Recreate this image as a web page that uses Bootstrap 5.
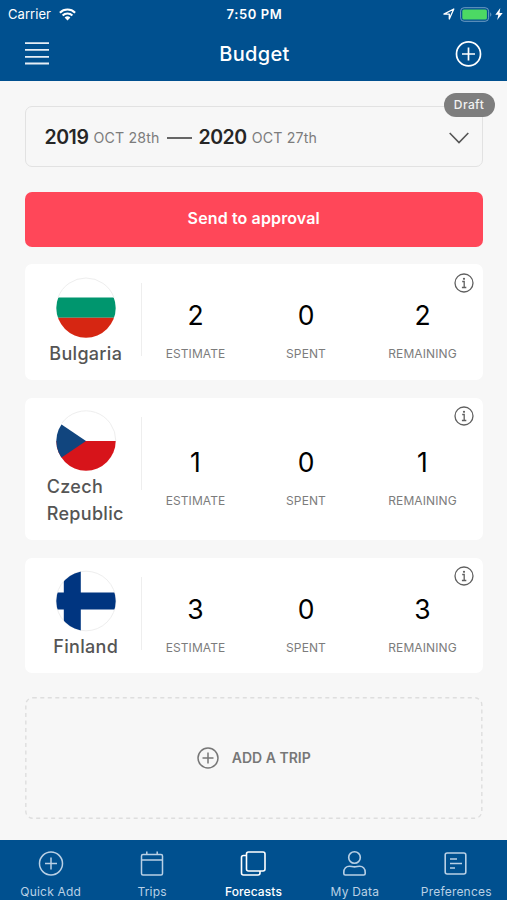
<!DOCTYPE html>
<html lang="en">
<head>
<meta charset="utf-8">
<meta name="viewport" content="width=device-width, initial-scale=1">
<title>Budget</title>
<link href="https://cdn.jsdelivr.net/npm/bootstrap@5.3.0/dist/css/bootstrap.min.css" rel="stylesheet">
<style>
body{font-family:Inter,"Liberation Sans",sans-serif;background:#f7f7f7;color:#222}
svg{display:block;fill:none;flex:none}
.app{height:900px;overflow:hidden}
.topbar{height:81px;background:#00508f;color:#fff}
.statusbar{height:27px;font-size:13px;line-height:28px;letter-spacing:.05px}
.carrier{padding-left:8px}
.clock{font-weight:600;letter-spacing:.6px;padding-right:2px}
.battery{margin-left:5px}
.bolt{margin-left:2px}
.titlebar{height:54px;padding:0 25px}
.titlebar h1{font-size:20px;font-weight:500;letter-spacing:.35px;line-height:52px;padding-left:5px}
.content{padding:25px 24.5px 0 25px}
.period{height:61px;border:1.5px solid #e2e2e2;border-radius:7px;padding:3px 13px 0 18.5px}
.year{font-size:19.5px;font-weight:600;letter-spacing:-.45px;color:#262626}
.day{font-size:14.2px;color:#7c7c7c;margin-left:5px;letter-spacing:.15px}
.dash{width:25px;height:1.5px;background:#666;margin:0 6px 0 8px}
.status-pill{top:-14px;right:-13px;height:24px;width:51px;background:#7e7e7e;color:#f2f2f2;font-size:12px;font-weight:500;line-height:23px;letter-spacing:.4px}
.btn-send{height:55px;margin-top:24.5px;margin-bottom:17.5px;background:#ff4759;border-radius:7px;color:#fff;font-size:16px;font-weight:600;letter-spacing:.13px;padding:0 0 3px}
.btn-send:hover{background:#f03c4f;color:#fff}
.trip{background:#fff;border-radius:7px;margin-bottom:18px;height:116px}
.trip.tall{height:142px}
.trip.last{height:115px;margin-bottom:24px}
.country{width:116px;padding-top:13px;padding-left:6px}
.tall .country,.last .country{padding-top:12px}
.country-name{font-size:18px;font-weight:500;line-height:27px;color:#555;letter-spacing:.3px;margin-top:1px;width:78px;white-space:nowrap}
.rule{width:1px;height:73px;margin-top:19px;background:#eee}
.figures{padding-top:18px}
.figure-col{text-align:center}
.c1{width:108px}.c2{width:113px}.c3{width:120px}
.amount{font-size:26.5px;line-height:32px;color:#000}
.caption-text{font-size:12px;line-height:18px;margin-top:14px;color:#7c7c7c;letter-spacing:.1px}
.info{top:9px;right:8.5px}
.tall .info,.last .info{top:8px}
.add-trip{height:122px;color:#777;font-size:14px;font-weight:600;gap:13px;position:relative;padding-bottom:1px}
.tabs{height:60px;background:#00508f;color:#b9d0e5;font-size:12px;letter-spacing:.2px}
.tabs a{width:20%;color:inherit;padding-top:10px;line-height:16px;gap:8px}
.tabs a.active{color:#fff;font-weight:500;letter-spacing:.1px}
</style>
</head>
<body>
<svg width="0" height="0" class="position-absolute" aria-hidden="true">
  <symbol id="info" viewBox="0 0 20 20"><g stroke="#606060" fill="none"><circle cx="10" cy="10" r="9" stroke-width="1.3"/><path d="M8.2 8.5h2v6M7.900 14.500h4.400" stroke-width="1.3"/></g><circle cx="10" cy="5.800" r="1.100" fill="#606060"/></symbol>
</svg>
<div class="app d-flex flex-column">
  <header class="topbar">
    <div class="statusbar row g-0">
      <div class="col d-flex align-items-center carrier">Carrier
        <svg class="ms-2" width="17" height="13" viewBox="0 0 17 13"><g stroke="#fff" stroke-width="2.1"><path d="M.9 4.700a10.800 10.800 0 0 1 15.200 0M3.600 7.500a6.900 6.900 0 0 1 9.800 0"/></g><path d="M5.600 9.600a4.100 4.100 0 0 1 5.800 0L8.500 12.500z" fill="#fff"/></svg>
      </div>
      <div class="col-auto clock">7:50 PM</div>
      <div class="col d-flex align-items-center justify-content-end pe-1">
        <svg width="12" height="12" viewBox="0 0 12 12"><path d="M.9 6.100 10.800 1 6.300 11V6.100z" stroke="#fff" stroke-width="1.3" stroke-linejoin="round"/></svg>
        <svg class="battery" width="33" height="15" viewBox="0 0 33 15"><rect x=".6" y=".7" width="28" height="13.600" rx="3.500" stroke="#6e9cc4"/><rect x="2.300" y="2.400" width="24.600" height="10.200" rx="1.500" fill="#4cd964"/><path d="M30.200 5.200q2.400 2.300 0 4.600z" fill="#6e9cc4"/></svg>
        <svg class="bolt" width="8" height="12" viewBox="0 0 8 12"><path d="M5.300 0 .3 6.700h3L2.200 12 7.700 5H4.500z" fill="#fff"/></svg>
      </div>
    </div>
    <div class="titlebar d-flex align-items-center justify-content-between">
      <svg width="24" height="24" viewBox="0 0 24 24"><path d="M0 1.100h24M0 7.900h24M0 14.800h24M0 21.500h24" stroke="#e6eef6" stroke-width="1.8"/></svg>
      <h1 class="m-0">Budget</h1>
      <svg width="27" height="27" viewBox="0 0 27 27" stroke="#fff" stroke-width="1.700"><circle cx="13.500" cy="12.900" r="12"/><path d="M13.500 6.500v13M7 13h13"/></svg>
    </div>
  </header>

  <main class="content flex-grow-1">
    <div class="period d-flex align-items-center position-relative">
      <span class="year">2019</span><span class="day">OCT 28th</span>
      <span class="dash"></span>
      <span class="year">2020</span><span class="day">OCT 27th</span>
      <svg class="ms-auto" width="20" height="12" viewBox="0 0 20 12"><path d="M.7 1 10 10.500 19.300 1" stroke="#555" stroke-width="1.600"/></svg>
      <span class="status-pill position-absolute rounded-pill text-center">Draft</span>
    </div>

    <button class="btn btn-send w-100 border-0">Send to approval</button>

    <section class="trip position-relative d-flex">
      <div class="country d-flex flex-column align-items-center">
        <svg width="62" height="62" viewBox="0 0 62 62"><clipPath id="disc"><circle cx="31" cy="31" r="29.700"/></clipPath><g clip-path="url(#disc)"><path d="M0 0h62v20.600H0z" fill="#fff"/><path d="M0 20.600h62v20.200H0z" fill="#00966e"/><path d="M0 40.800h62V62H0z" fill="#d62612"/></g><path d="M3 20.600a29.800 29.800 0 0 1 56 0" stroke="#eee"/></svg>
        <div class="country-name text-center">Bulgaria</div>
      </div>
      <div class="rule"></div>
      <div class="figures d-flex align-items-center">
        <div class="figure-col c1"><div class="amount">2</div><div class="caption-text">ESTIMATE</div></div>
        <div class="figure-col c2"><div class="amount">0</div><div class="caption-text">SPENT</div></div>
        <div class="figure-col c3"><div class="amount">2</div><div class="caption-text">REMAINING</div></div>
      </div>
      <svg class="info position-absolute" width="20" height="20"><use href="#info"/></svg>
    </section>

    <section class="trip tall position-relative d-flex">
      <div class="country d-flex flex-column align-items-center">
        <svg width="62" height="62" viewBox="0 0 62 62"><g clip-path="url(#disc)"><path d="M0 0h62v31H0z" fill="#fff"/><path d="M0 31h62v31H0z" fill="#d7141a"/><path d="M-15 0 31 31-15 62z" fill="#11457e"/></g><path d="M7 13a29.800 29.800 0 0 1 53.800 18" stroke="#eee"/></svg>
        <div class="country-name">Czech<br>Republic</div>
      </div>
      <div class="rule"></div>
      <div class="figures d-flex align-items-center">
        <div class="figure-col c1"><div class="amount">1</div><div class="caption-text">ESTIMATE</div></div>
        <div class="figure-col c2"><div class="amount">0</div><div class="caption-text">SPENT</div></div>
        <div class="figure-col c3"><div class="amount">1</div><div class="caption-text">REMAINING</div></div>
      </div>
      <svg class="info position-absolute" width="20" height="20"><use href="#info"/></svg>
    </section>

    <section class="trip last position-relative d-flex">
      <div class="country d-flex flex-column align-items-center">
        <svg width="62" height="62" viewBox="0 0 62 62"><circle cx="31" cy="31" r="29.800" fill="#fff" stroke="#eee"/><path clip-path="url(#disc)" d="M0 22.600h8.800V0h17v22.600H62v16.800H25.800V62h-17V39.400H0z" fill="#003580"/></svg>
        <div class="country-name text-center">Finland</div>
      </div>
      <div class="rule"></div>
      <div class="figures d-flex align-items-center">
        <div class="figure-col c1"><div class="amount">3</div><div class="caption-text">ESTIMATE</div></div>
        <div class="figure-col c2"><div class="amount">0</div><div class="caption-text">SPENT</div></div>
        <div class="figure-col c3"><div class="amount">3</div><div class="caption-text">REMAINING</div></div>
      </div>
      <svg class="info position-absolute" width="20" height="20"><use href="#info"/></svg>
    </section>

    <div class="add-trip d-flex align-items-center justify-content-center">
      <svg class="position-absolute top-0 start-0 w-100 h-100"><rect x=".8" y=".8" width="456" height="120.500" rx="7" stroke="#dedede" stroke-width="1.400" stroke-dasharray="4 3.500"/></svg>
      <svg width="22" height="22" viewBox="0 0 22 22" stroke="#777" stroke-width="1.500"><circle cx="11" cy="11" r="10"/><path d="M11 5.500v11M5.500 11h11"/></svg>
      <span>ADD A TRIP</span>
    </div>
  </main>

  <nav class="tabs d-flex">
    <a href="#" class="d-flex flex-column align-items-center text-decoration-none">
      <svg width="26" height="26" viewBox="0 0 26 26" stroke="currentColor" stroke-width="1.500"><circle cx="13" cy="13.500" r="11.500"/><path d="M13 7.500v12M7 13.500h12"/></svg>Quick Add</a>
    <a href="#" class="d-flex flex-column align-items-center text-decoration-none">
      <svg width="26" height="26" viewBox="0 0 26 26" stroke="currentColor" stroke-width="1.500"><rect x="2.500" y="4.500" width="21" height="20.500" rx="1.500"/><path d="M2.500 10h21M7.800 1.500v3M18.200 1.500v3"/></svg>Trips</a>
    <a href="#" class="active d-flex flex-column align-items-center text-decoration-none">
      <svg width="26" height="26" viewBox="0 0 26 26" stroke="currentColor" stroke-width="1.600"><rect x="6.500" y="2" width="18.500" height="19" rx="2"/><path d="M6.500 5.500H3.500a2 2 0 0 0-2 2V23a2 2 0 0 0 2 2H18a2 2 0 0 0 2-2v-2"/></svg>Forecasts</a>
    <a href="#" class="d-flex flex-column align-items-center text-decoration-none">
      <svg width="26" height="26" viewBox="0 0 26 26" stroke="currentColor" stroke-width="1.600"><circle cx="12.500" cy="7.500" r="5.800"/><path d="M3.300 25h18.400q1.500 0 1.500-1.500v-1c0-4-2.500-6.300-5.700-6.300-1.500 0-3 .7-5 .7s-3.500-.7-5-.7c-3.200 0-5.700 2.300-5.700 6.300v1q0 1.500 1.500 1.500z"/></svg>My Data</a>
    <a href="#" class="d-flex flex-column align-items-center text-decoration-none">
      <svg width="26" height="26" viewBox="0 0 26 26" stroke="currentColor" stroke-width="1.600"><rect x="2.200" y="3" width="20.600" height="21" rx="2"/><path d="M7 9h7M7 13.500h12M7 18h5"/></svg>Preferences</a>
  </nav>
</div>
<script src="https://cdn.jsdelivr.net/npm/bootstrap@5.3.0/dist/js/bootstrap.bundle.min.js"></script>
</body>
</html>
